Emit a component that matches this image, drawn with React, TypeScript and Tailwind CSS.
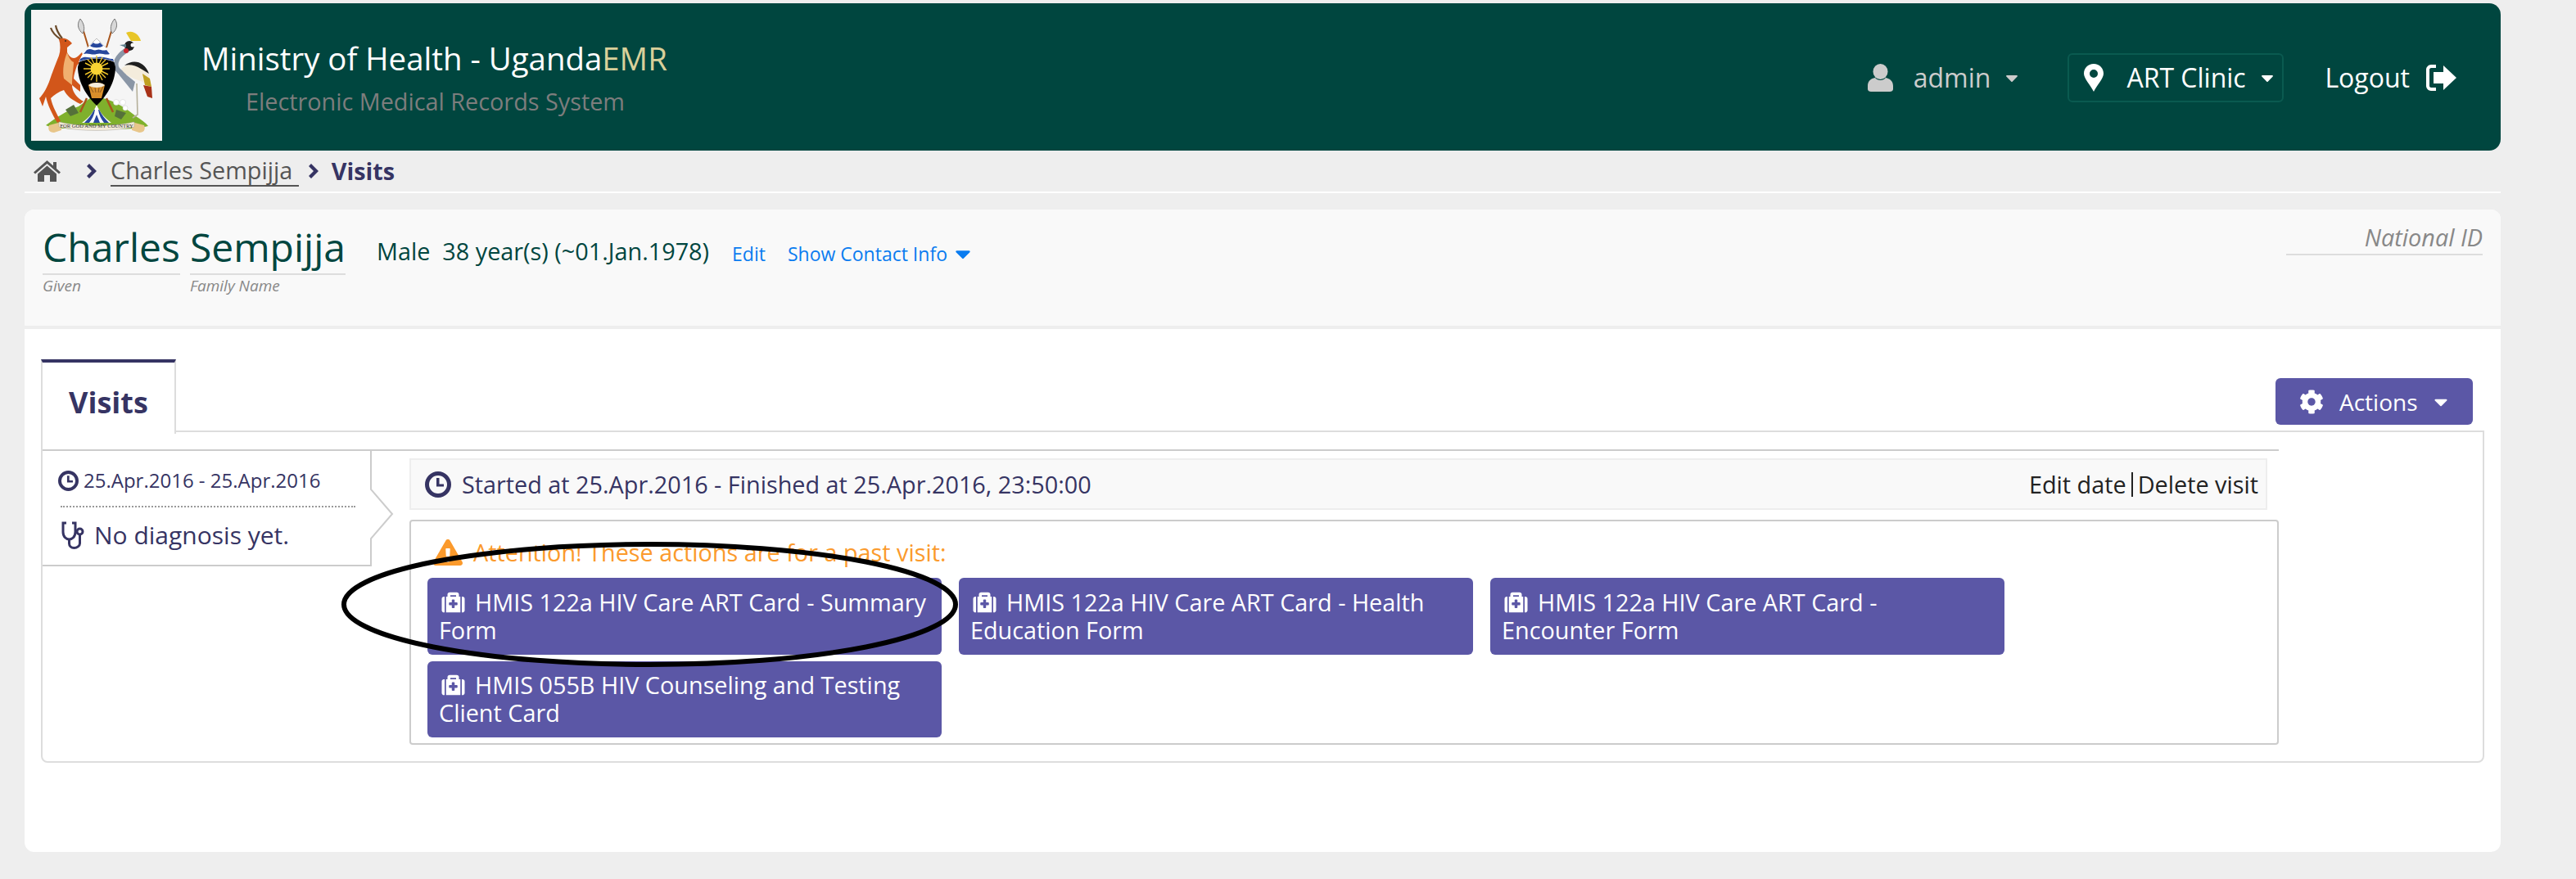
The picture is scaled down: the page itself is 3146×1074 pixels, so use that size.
import { FaCaretDown, FaCog, FaExclamationTriangle, FaMedkit } from 'react-icons/fa'

function CoatOfArms() {
  return (
    <svg viewBox="0 0 160 160" className="h-[160px] w-[160px] shrink-0 bg-[#f5f5f5]">
      {/* spears */}
      <path d="M64 26 L70 46" stroke="#a8551c" strokeWidth="2" />
      <path d="M98 26 L92 46" stroke="#a8551c" strokeWidth="2" />
      <path d="M60 11 C55 18 58 25 63 29 C66 24 65 17 60 11Z" fill="#d8d8d8" stroke="#777" strokeWidth="1" />
      <path d="M102 11 C107 18 104 25 99 29 C96 24 97 17 102 11Z" fill="#d8d8d8" stroke="#777" strokeWidth="1" />
      {/* ground */}
      <path d="M18 141 C30 132 42 124 58 118 L72 108 L88 108 C104 112 118 122 128 130 C134 134 140 138 143 142 C130 146 110 146 80 146 C50 146 30 146 18 141Z" fill="#7fb02c" />
      <path d="M42 122 L52 116 L58 126 L48 130Z" fill="#55713a" />
      <path d="M104 122 L116 126 L110 134 L102 130Z" fill="#55713a" />
      <circle cx="104" cy="113" r="3.5" fill="#fff" stroke="#ccc" strokeWidth="0.5" />
      <circle cx="112" cy="113" r="3.5" fill="#fff" stroke="#ccc" strokeWidth="0.5" />
      <circle cx="115" cy="120" r="3" fill="#fff" stroke="#ccc" strokeWidth="0.5" />
      {/* spear butts */}
      <path d="M68 108 L60 125" stroke="#a8551c" strokeWidth="2.5" />
      <path d="M92 108 L100 125" stroke="#a8551c" strokeWidth="2.5" />
      {/* water */}
      <path d="M80 116 C76 126 70 132 62 138 L98 138 C90 132 84 126 80 116Z" fill="#fff" />
      <path d="M77 122 C74 128 70 133 65 138 L71 138 C74 134 77 129 78 122Z" fill="#27479c" />
      <path d="M83 122 C86 128 90 133 95 138 L89 138 C86 134 83 129 82 122Z" fill="#27479c" />
      <path d="M80 128 L76 138 L84 138Z" fill="#27479c" />
      {/* kob */}
      <path d="M24 22 C26 28 30 32 36 36 M30 19 C31 26 34 30 38 35" stroke="#6b4a2a" strokeWidth="2.2" fill="none" />
      <path d="M34 36 C40 33 46 36 50 41 L44 46 L44 52 C47 58 52 62 58 56 L62 52 L64 58 L56 68 C54 74 52 80 52 84 L60 92 L60 100 L56 97 L50 92 C50 100 56 108 64 112 L60 115 C50 110 44 106 40 98 C34 100 28 104 24 108 C26 118 32 128 36 136 L32 138 C26 128 20 116 18 106 L14 118 L10 108 C14 104 18 98 22 88 C26 76 30 66 34 56 C36 50 36 42 34 36Z" fill="#d2561a" />
      <path d="M44 52 C40 62 38 74 40 84 L50 92 C50 80 52 70 52 64 C48 62 46 58 44 52Z" fill="#f0b070" />
      <circle cx="42" cy="38" r="0.9" fill="#222" />
      {/* crane */}
      <path d="M129 90 L130 128 L124 132" stroke="#b5b09a" strokeWidth="1.6" fill="none" />
      <path d="M103 74 L124 100 L127 88 L112 76Z" fill="#8a96a6" />
      <path d="M119 48 C108 54 102 62 104 70 C106 76 112 78 116 80" stroke="#8a96a6" strokeWidth="6" fill="none" />
      <path d="M110 72 C120 64 134 62 142 74 C146 84 146 92 146 96 L136 88 C126 84 116 82 110 72Z" fill="#f4ecdc" />
      <path d="M114 68 C124 60 138 62 144 78 L134 72 C128 68 120 66 114 68Z" fill="#1f1f1f" />
      <path d="M136 78 L145 84 L147 94 L139 92Z" fill="#c0a020" />
      <path d="M137 92 L147 94 L148 108 L142 106Z" fill="#a83218" />
      <path d="M116 28 C124 24 132 30 134 38 L122 38Z" fill="#e8c628" />
      <circle cx="120" cy="44" r="6" fill="#1f1f1f" />
      <path d="M108 43 L116 42 L116 46Z" fill="#5f7f8c" />
      <circle cx="116" cy="50" r="3" fill="#c9242c" />
      <circle cx="124" cy="43" r="2.5" fill="#fff" />
      {/* shield */}
      <path d="M80 35 C90 44 100 56 103 70 C103 88 92 106 80 117 C68 106 57 88 57 70 C60 56 70 44 80 35Z" fill="#000" />
      <path d="M80 35 C90 44 98 53 102 64 C88 58 72 58 58 64 C62 53 70 44 80 35Z" fill="#fff" />
      <path d="M76 40 C78 42 82 42 84 40 L88 44 C84 47 76 47 72 44Z" fill="#27479c" />
      <path d="M68 49 C74 46 76 51 80 49 C84 47 86 51 92 49 L96 54 C90 56 86 52 80 54 C74 56 70 52 64 54Z" fill="#27479c" />
      <path d="M60 60 C66 55 72 60 80 58 C88 56 94 60 100 60 L101 63 C88 58 72 58 59 63Z" fill="#27479c" />
      {/* sun */}
      <g stroke="#f0c528" strokeWidth="1.4">
        <path d="M80 56 V88 M64 72 H96 M69 61 L91 83 M91 61 L69 83 M73 58 L87 86 M87 58 L73 86 M66 65 L94 79 M94 65 L66 79" />
      </g>
      <circle cx="80" cy="72" r="7.5" fill="#fbd433" />
      {/* drum */}
      <path d="M70 92 C74 88 86 88 90 92 L86 108 L74 108Z" fill="#d98f2b" />
      <path d="M70 92 C74 88 86 88 90 92 C86 96 74 96 70 92Z" fill="#f4ecdc" />
      <path d="M72 94 L76 101 M78 95 L79 101 M83 95 L82 101 M88 94 L84 101" stroke="#7a4a1c" strokeWidth="0.8" />
      {/* ribbon */}
      <path d="M22 141 L37 137 L37 147 L28 150 C22 150 20 146 22 141Z" fill="#e8c68a" />
      <path d="M138 141 L123 137 L123 147 L132 150 C138 150 140 146 138 141Z" fill="#e8c68a" />
      <path d="M34 137 C60 143 100 143 126 137 L126 143 C100 149 60 149 34 143Z" fill="#f2ead8" stroke="#999" strokeWidth="0.4" />
      <text x="80" y="144" textAnchor="middle" fontSize="6.6" fontFamily="Liberation Serif, serif" fill="#333">FOR GOD AND MY COUNTRY</text>
    </svg>
  )
}

function HomeIcon() {
  return (
    <svg viewBox="0 0 33 26" className="h-[26px] w-[33px]" fill="#555">
      <path d="M16.5 0 L24 6.5 V2 H28 V10 L33 14.5 L31 16.5 L16.5 4 L2 16.5 L0 14.5Z" />
      <path d="M5 16.5 L16.5 6.5 L28 16.5 V26 H20 V18 H13 V26 H5Z" />
    </svg>
  )
}

function Chevron() {
  return (
    <svg viewBox="0 0 12 18" className="h-[18px] w-[12px]" fill="#363463">
      <path d="M3 0 L12 9 L3 18 L0 15 L6 9 L0 3Z" />
    </svg>
  )
}

function UserIcon() {
  return (
    <svg viewBox="0 0 31 34" className="h-[34px] w-[31px]" fill="#cccccc">
      <ellipse cx="15.5" cy="9.5" rx="9" ry="9.5" />
      <path d="M9 17 C12 21 19 21 22 17 C27 18 31 21 31 27 V31 C31 33 29 34 27 34 H4 C2 34 0 33 0 31 V27 C0 21 4 18 9 17Z" />
    </svg>
  )
}

function PinIcon() {
  return (
    <svg viewBox="0 0 24 34" className="h-[34px] w-[24px]" fill="#ffffff">
      <path fillRule="evenodd" d="M12 0 C19 0 24 5 24 12 C24 18 16 26 12 34 C8 26 0 18 0 12 C0 5 5 0 12 0Z M12 7 A5 5 0 1 0 12 17 A5 5 0 1 0 12 7Z" />
    </svg>
  )
}

function LogoutIcon() {
  return (
    <svg viewBox="0 0 37 32" className="h-[32px] w-[37px]" fill="#ffffff">
      <path d="M12 0 V4 H6 C5 4 4 5 4 6 V26 C4 27 5 28 6 28 H12 V32 H6 C3 32 0 29 0 26 V6 C0 3 3 0 6 0Z" />
      <path d="M21 1 L37 16 L21 31 V23 H9 V9 H21Z" />
    </svg>
  )
}

function ClockIcon({ className }: { className: string }) {
  return (
    <svg viewBox="0 0 32 32" className={className} fill="#363463">
      <path fillRule="evenodd" d="M16 0 A16 16 0 1 0 16 32 A16 16 0 1 0 16 0Z M16 5 A11 11 0 1 1 16 27 A11 11 0 1 1 16 5Z" />
      <path d="M14 8 H17.5 V15.5 H23 V18.5 H14Z" />
    </svg>
  )
}

function StethoscopeIcon() {
  return (
    <svg viewBox="0 0 29 34" className="h-[34px] w-[29px]" fill="none" stroke="#363463" strokeWidth="3">
      <path d="M7 2 H3 V13 C3 19 7 22 10.5 22 C14 22 18 19 18 13 V2 H14" />
      <path d="M10.5 22 V27 C10.5 30 13 32.5 16.5 32.5 C20 32.5 23.5 30 23.5 27 V16" />
      <circle cx="23.5" cy="12.5" r="3.5" />
    </svg>
  )
}

function FormButton({ first, second }: { first: string; second: string }) {
  return (
    <button className="h-[93.5px] rounded-[6px] bg-[#5b57a6] pl-[14px] pr-[10px] text-left text-[28.8px] leading-[34px] text-white">
      <span className="flex items-center">
        <FaMedkit className="mr-[11px] ml-[2px] h-[28px] w-[31px]" />
        {first}
      </span>
      <span className="block">{second}</span>
    </button>
  )
}

export default function App() {
  return (
    <div className="relative min-h-[1074px] w-[3146px] bg-[#eeeeee] pt-[4px] pl-[30px] font-['Open_Sans',sans-serif] text-[28.8px]">
      <div className="w-[3024px]">
        <header className="flex h-[180px] rounded-[14px] bg-[#00463f] pt-[8px] pl-[8px]">
          <CoatOfArms />
          <div className="ml-[48px] pt-[32px]">
            <div className="text-[38.4px] leading-[54px] text-white">
              Ministry of Health - Uganda<span className="text-[#d9d09a]">EMR</span>
            </div>
            <div className="mt-[7px] pl-[54px] text-[28.8px] leading-[38px] text-[#7d7d7d]">Electronic Medical Records System</div>
          </div>
          <div className="mr-[54px] ml-auto flex items-center pb-[6px] text-[32px]">
            <UserIcon />
            <span className="ml-[25px] text-[#cccccc]">admin</span>
            <FaCaretDown className="mr-[60px] ml-[18px] h-[24px] w-[16px] text-[#cccccc]" />
            <div className="flex h-[60px] w-[264px] items-center rounded-[6px] border-2 border-[#0a5a50] pl-[18px]">
              <PinIcon />
              <span className="ml-[28px] text-white">ART Clinic</span>
              <FaCaretDown className="ml-[18px] h-[24px] w-[16px] text-white" />
            </div>
            <span className="ml-[50px] text-white">Logout</span>
            <span className="ml-[20px]">
              <LogoutIcon />
            </span>
          </div>
        </header>

        <nav className="flex h-[52px] items-center border-b-2 border-white pl-[11px] text-[28.8px]">
          <HomeIcon />
          <span className="ml-[32px]">
            <Chevron />
          </span>
          <span className="ml-[17px] whitespace-pre border-b-2 border-[#555555] leading-[36px] text-[#555555]">Charles Sempijja </span>
          <span className="ml-[12px]">
            <Chevron />
          </span>
          <span className="ml-[16px] font-bold text-[#363463]">Visits</span>
        </nav>

        <main className="mt-[20px] h-[785px] rounded-[12px] bg-white">
          <section className="flex h-[146px] justify-between rounded-t-[12px] border-b-4 border-[#eeeeee] bg-[#f9f9f9] pt-[14px] pr-[22px] pl-[22px]">
            <div className="flex items-start">
              <div>
                <div className="border-b-2 border-[#dddddd] text-[48px] leading-[64px] text-[#00463f]">Charles</div>
                <div className="mt-[1px] text-[19px] italic leading-[24px] text-[#888888]">Given</div>
              </div>
              <div className="ml-[12px]">
                <div className="border-b-2 border-[#dddddd] text-[48px] leading-[64px] text-[#00463f]">Sempijja</div>
                <div className="mt-[1px] text-[19px] italic leading-[24px] text-[#888888]">Family Name</div>
              </div>
              <div className="mt-[18px] ml-[38px] whitespace-pre leading-[38px] text-[#00463f]">Male  38 year(s) (~01.Jan.1978)</div>
              <div className="mt-[23px] ml-[28px] text-[23px] leading-[34px] text-[#0a7cf0]">Edit</div>
              <div className="mt-[23px] ml-[27px] flex items-center text-[23px] leading-[34px] text-[#0a7cf0]">
                Show Contact Info
                <FaCaretDown className="ml-[8px] h-[30px] w-[22px]" />
              </div>
            </div>
            <div className="h-[42px] w-[240px] border-b-2 border-[#dddddd] pt-[1px] text-right italic leading-[38px] text-[#888888]">National ID</div>
          </section>

          <section className="px-[20px] pt-[37px]">
            <div className="flex h-[87px] items-end justify-between">
              <div className="relative z-10 -mb-[4px] flex h-[91px] w-[165px] items-center justify-center border-x-2 border-t-4 border-x-[#dddddd] border-t-[#363463] bg-white pt-[10px] text-[36px] font-bold text-[#363463]">
                Visits
              </div>
              <button className="mr-[14px] mb-[7px] flex h-[57px] w-[241px] items-center rounded-[6px] bg-[#5b57a6] pl-[29px] text-[28px] text-white">
                <FaCog className="h-[30px] w-[30px]" />
                <span className="ml-[19px]">Actions</span>
                <FaCaretDown className="ml-[16px] h-[26px] w-[24px]" />
              </button>
            </div>

            <div className="h-[406px] rounded-b-[8px] border-2 border-[#dddddd] pt-[21px]">
              <div className="mr-[249px] flex border-t-2 border-[#cccccc]">
                <div className="relative h-[141px] w-[402px] shrink-0 border-b-2 border-[#cccccc]">
                  <div className="flex items-center pt-[20px] pl-[19px]">
                    <ClockIcon className="h-[25px] w-[25px]" />
                    <span className="ml-[6px] text-[24px] leading-[32px] text-[#363463]">25.Apr.2016 - 25.Apr.2016</span>
                  </div>
                  <div className="mt-[15px] mr-[20px] ml-[22px] border-t-2 border-dotted border-[#999999]" />
                  <div className="mt-[14px] flex items-center pl-[22px]">
                    <StethoscopeIcon />
                    <span className="ml-[12px] text-[30px] leading-[40px] text-[#363463]">No diagnosis yet.</span>
                  </div>
                  <svg viewBox="0 0 30 141" className="absolute top-0 left-[400px] h-[141px] w-[30px]" fill="none" stroke="#cccccc" strokeWidth="2">
                    <path d="M1 0 V47 L27 77 L1 107 V141" />
                  </svg>
                </div>

                <div className="flex-1 pt-[9px] pl-[46px]">
                  <div className="mr-[14px] flex h-[63px] items-center justify-between border-2 border-[#eeeeee] bg-[#f9f9f9] pr-[9px] pl-[17px]">
                    <div className="flex items-center text-[#363463]">
                      <ClockIcon className="h-[32px] w-[32px]" />
                      <span className="ml-[13px]">Started at 25.Apr.2016 - Finished at 25.Apr.2016, 23:50:00</span>
                    </div>
                    <div className="flex items-center text-[#222222]">
                      Edit date
                      <span className="mx-[6px] h-[30px] w-[2px] bg-[#222222]" />
                      Delete visit
                    </div>
                  </div>

                  <div className="mt-[12px] h-[275px] rounded-[4px] border-2 border-[#cccccc] pt-[22px] pl-[20px]">
                    <div className="flex h-[32px] items-center pl-[7px] text-[#fb9a2c]">
                      <FaExclamationTriangle className="h-[32px] w-[36px]" />
                      <span className="ml-[13px]">Attention! These actions are for a past visit:</span>
                    </div>
                    <div className="mt-[15px] grid w-[1926px] grid-cols-[628px_628px_628px] gap-x-[21px] gap-y-[8px]">
                      <FormButton first="HMIS 122a HIV Care ART Card - Summary" second="Form" />
                      <FormButton first="HMIS 122a HIV Care ART Card - Health" second="Education Form" />
                      <FormButton first="HMIS 122a HIV Care ART Card -" second="Encounter Form" />
                      <FormButton first="HMIS 055B HIV Counseling and Testing" second="Client Card" />
                    </div>
                  </div>
                </div>
              </div>
            </div>
          </section>
        </main>
      </div>

      {/* hand drawn annotation over the first form button */}
      <svg viewBox="0 0 760 160" className="pointer-events-none absolute top-[659px] left-[414px] h-[160px] w-[760px]" fill="none" stroke="#000000" strokeWidth="6">
        <ellipse cx="379.5" cy="79.5" rx="373.5" ry="73.5" />
      </svg>
    </div>
  )
}
